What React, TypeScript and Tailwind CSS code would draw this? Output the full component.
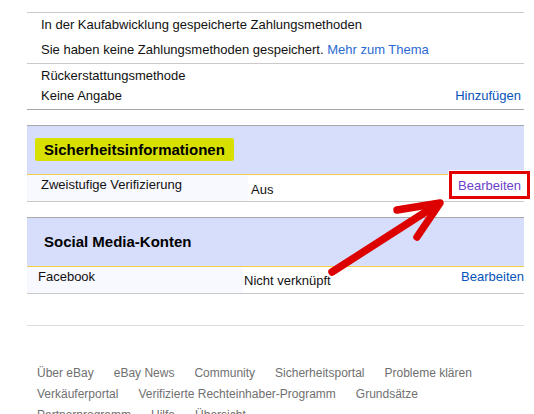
export default function App() {
  return (
    <div className="relative h-[414px] w-[534px] overflow-hidden bg-white font-['Liberation_Sans',Arial,sans-serif] text-[13px] leading-[16px] text-[#111]">
      <div className="ml-[27px] w-[497px] pt-[12px]">
        {/* Zahlungsmethoden */}
        <div className="border-t border-[#c9c9c9] pl-[14px] pt-[4px] pb-[5px]">
          <p>In der Kaufabwicklung gespeicherte Zahlungsmethoden</p>
          <p className="mt-[9px]">
            Sie haben keine Zahlungsmethoden gespeichert. <a className="text-[#2b6ad3]">Mehr zum Thema</a>
          </p>
        </div>

        {/* Rückerstattung */}
        <div className="border-t border-b border-t-[#c9c9c9] border-b-[#a8a8a8] pl-[14px] pt-[4px] pb-[5px]">
          <p>Rückerstattungsmethode</p>
          <div className="mt-[4px] flex justify-between pr-[3px]">
            <span>Keine Angabe</span>
            <a className="text-[#0654ba]">Hinzufügen</a>
          </div>
        </div>

        {/* Sicherheitsinformationen */}
        <div className="mt-[15px] border-t border-b border-t-[#a8a8a8] border-b-[#f5cf47] bg-[#d6defc] pl-[8px] pt-[12px] pb-[13px]">
          <span className="inline-block rounded-[2px] bg-[#d7e000] px-[9px] py-[3px] text-[15px] font-bold leading-[17px] text-black">
            Sicherheitsinformationen
          </span>
        </div>
        <div className="flex h-[27px] border-b border-[#c9c9c9]">
          <div className="w-[221px] bg-[#f8f8ff] pl-[14px] pt-[2px]">Zweistufige Verifizierung</div>
          <div className="pl-[3px] pt-[7px]">Aus</div>
          <div className="ml-auto pr-[3px] pt-[3px]">
            <span className="relative inline-block">
              <span className="absolute -top-[7px] -bottom-[5px] -left-[9px] -right-[9px] border-[3px] border-[#e30000] bg-white shadow-[0_0_0_1px_white]" />
              <a className="relative text-[#6d3fc9]">Bearbeiten</a>
            </span>
          </div>
        </div>

        {/* Social Media-Konten */}
        <div className="mt-[15px] border-t border-b border-t-[#a8a8a8] border-b-[#f5cf47] bg-[#d6defc] pl-[17px] pt-[15px] pb-[15px]">
          <span className="text-[15px] font-bold leading-[18px] text-black">Social Media-Konten</span>
        </div>
        <div className="flex h-[27px] border-b border-[#c9c9c9]">
          <div className="w-[216px] bg-[#f8f8ff] pl-[11px] pt-[2px]">Facebook</div>
          <div className="pl-[1px] pt-[6px]">Nicht verknüpft</div>
          <div className="ml-auto pt-[2px]">
            <a className="text-[#0654ba]">Bearbeiten</a>
          </div>
        </div>

        {/* Footer */}
        <div className="mt-[31px] border-t border-[#dcdcdc] pl-[10px] pt-[39px] text-[12px] leading-[16px] text-[#707070]">
          <div className="flex gap-x-[20px]">
            <a>Über eBay</a>
            <a>eBay News</a>
            <a>Community</a>
            <a>Sicherheitsportal</a>
            <a>Probleme klären</a>
          </div>
          <div className="mt-[5px] flex gap-x-[20px]">
            <a>Verkäuferportal</a>
            <a>Verifizierte Rechteinhaber-Programm</a>
            <a>Grundsätze</a>
          </div>
          <div className="mt-[5px] flex gap-x-[20px]">
            <a>Partnerprogramm</a>
            <a>Hilfe</a>
            <a>Übersicht</a>
          </div>
        </div>
      </div>

      {/* Annotation arrow */}
      <svg className="pointer-events-none absolute inset-0" width="534" height="414" viewBox="0 0 534 414">
        <g stroke="#dc0000" strokeWidth="7.5" strokeLinecap="round" strokeLinejoin="round" fill="none">
          <path d="M332 272 L438 204" />
          <path d="M397 210 L440 203 L417 237" />
        </g>
      </svg>
    </div>
  );
}
